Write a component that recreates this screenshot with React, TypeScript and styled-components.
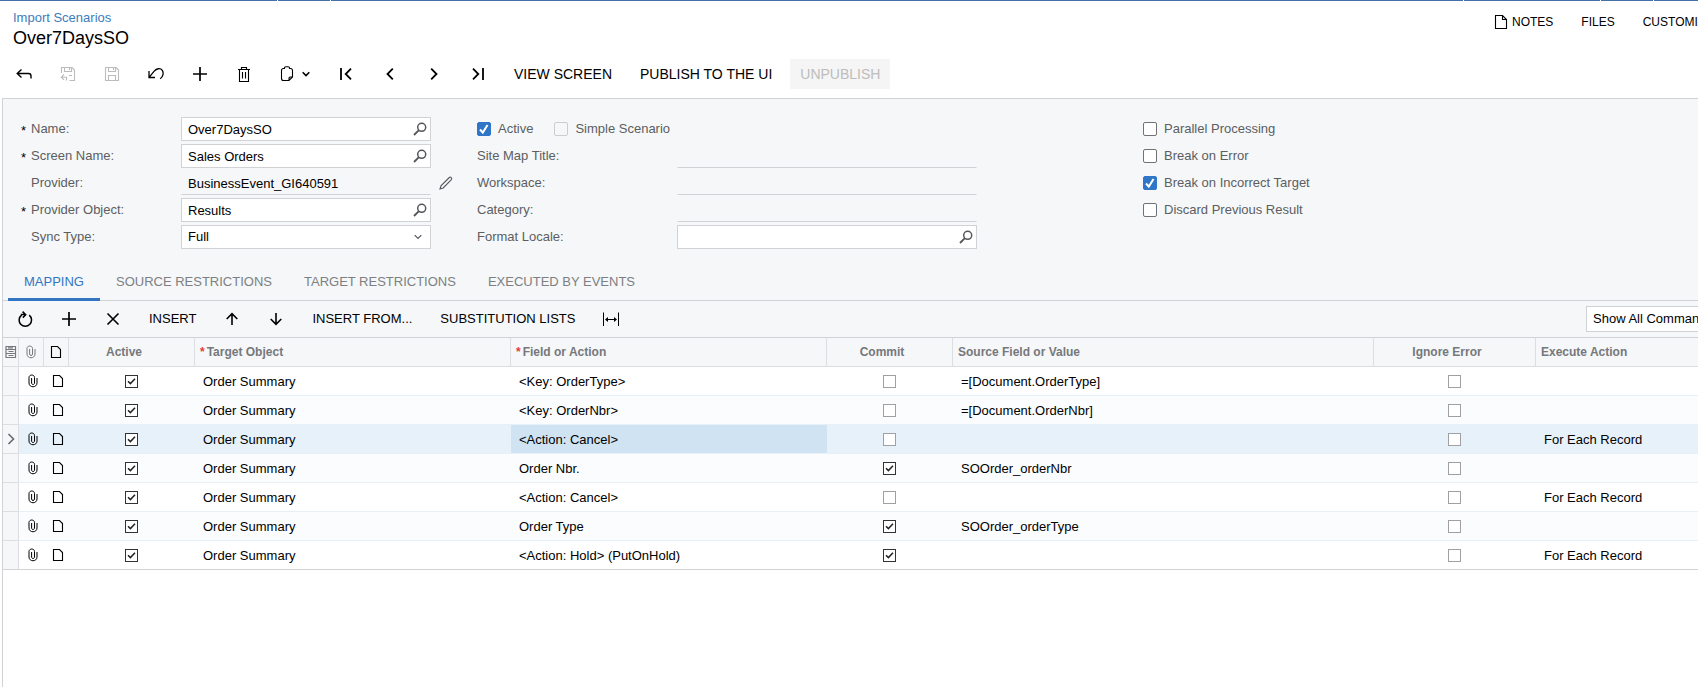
import React from "react";
import styled, { createGlobalStyle, css } from "styled-components";

const GlobalStyle = createGlobalStyle`
  *, *::before, *::after { box-sizing: border-box; }
  html, body { margin: 0; overflow-x: hidden; }
  body {
    background: #fff;
    color: #000;
    font: 13px/16px "Liberation Sans", Arial, sans-serif;
  }
  button, input, select { font: inherit; color: inherit; margin: 0; }
`;

const LINE = "#d0d2d6";
const PANEL = "#f5f7f9";

const Shell = styled.div`
  display: flex;
  flex-direction: column;
  min-height: 100vh;
  overflow: hidden;
`;

const TopStrip = styled.div`
  display: grid;
  grid-template-columns: 277px 52px 1fr 136px 52px 44px;
  gap: 1px;
  height: 1px;
`;

const StripSegment = styled.span`
  background: #4671a6;
`;

const Header = styled.header`
  display: flex;
  justify-content: space-between;
  padding: 9px 0 0 13px;
`;

const Breadcrumb = styled.a`
  display: block;
  color: #3d7cbc;
  text-decoration: none;
`;

const Title = styled.h1`
  margin: 1px 0 0;
  font-size: 18px;
  line-height: 22px;
  font-weight: 400;
`;

const HeaderTools = styled.div`
  display: flex;
  gap: 28px;
  width: 204px;
  flex: none;
  align-items: flex-start;
  padding-top: 4px;
`;

const HeaderButton = styled.button`
  display: flex;
  flex: none;
  align-items: center;
  gap: 4px;
  height: 16px;
  padding: 0;
  border: 0;
  background: none;
  font-size: 12px;
  white-space: nowrap;
`;

const Toolbar = styled.div<{ $grid?: boolean }>`
  display: flex;
  align-items: center;
  gap: 8px;
  ${({ $grid }) =>
    $grid
      ? css`
          height: 37px;
          padding-left: 4px;
          border-bottom: 1px solid ${LINE};
          font-size: 13px;
        `
      : css`
          height: 49px;
          padding-left: 6px;
          font-size: 14px;
        `}
`;

const ToolButton = styled.button<{ $icon?: boolean; $wide?: boolean }>`
  display: flex;
  flex: none;
  align-items: center;
  justify-content: center;
  gap: 6px;
  height: 30px;
  width: ${({ $icon, $wide }) => ($wide ? "50px" : $icon ? "36px" : "auto")};
  padding: ${({ $icon }) => ($icon ? "0" : "0 10px")};
  border: 0;
  background: none;
  white-space: nowrap;
  &:disabled { color: #bcbcbc; }
  &:disabled:not(:has(svg)) { background: #f5f5f5; }
`;

const WorkArea = styled.main`
  flex: 1;
  margin-left: 2px;
  border-top: 1px solid ${LINE};
  border-left: 1px solid ${LINE};
`;

const Panel = styled.section`
  background: ${PANEL};
`;

const Form = styled.form`
  display: grid;
  grid-template-columns: 456px 666px 1fr;
  padding: 18px 0 0 18px;
`;

const FormColumn = styled.div`
  display: flex;
  flex-direction: column;
  gap: 3px;
`;

const FormRow = styled.div<{ $label: number }>`
  display: grid;
  grid-template-columns: ${({ $label }) => $label}px auto 1fr;
  align-items: center;
  height: 24px;
`;

const CheckRow = styled.div`
  display: flex;
  align-items: center;
  gap: 21px;
  height: 24px;
`;

const FieldLabel = styled.label<{ $starred?: boolean }>`
  display: flex;
  color: #5c5e61;
  padding-left: ${({ $starred }) => ($starred ? "0" : "10px")};
`;

const PlainLabel = styled(FieldLabel)`
  padding-left: 0;
`;

const Star = styled.span`
  width: 10px;
  height: 16px;
  padding-top: 2px;
  color: #000;
`;

const Box = styled.div<{ $width: number; $flat?: boolean }>`
  display: flex;
  align-items: center;
  width: ${({ $width }) => $width}px;
  height: 24px;
  border: 1px solid ${LINE};
  background: #fff;
  color: #54565a;
  ${({ $flat }) =>
    $flat &&
    css`
      border-color: transparent transparent ${LINE};
      background: none;
    `}
`;

const TextInput = styled.input`
  flex: 1;
  min-width: 0;
  height: 22px;
  padding: 1px 0 0 6px;
  border: 0;
  outline: 0;
  background: none;
  color: #000;
`;

const Select = styled.select`
  appearance: none;
  flex: 1;
  height: 22px;
  padding: 0 0 0 6px;
  border: 0;
  background: none;
  color: #000;
`;

const IconButton = styled.button`
  display: flex;
  align-items: center;
  justify-content: center;
  width: 20px;
  height: 20px;
  padding: 0;
  border: 0;
  background: none;
  color: #54565a;
`;

const ChevronSlot = styled.span`
  display: flex;
  justify-content: center;
  width: 24px;
  pointer-events: none;
`;

const EditSlot = styled.span`
  padding-left: 5px;
`;

const CheckLabel = styled.label`
  display: flex;
  align-items: center;
  gap: 7px;
  color: #5c5e61;
`;

const CheckStack = styled.span<{ $size: number }>`
  display: inline-grid;
  width: ${({ $size }) => $size}px;
  height: ${({ $size }) => $size}px;
  vertical-align: middle;
  & > * { grid-area: 1 / 1; }
  & > svg { pointer-events: none; }
`;

const FormCheck = styled.input`
  appearance: none;
  width: 14px;
  height: 14px;
  border: 1px solid #707276;
  border-radius: 2px;
  background: #fff;
  &:checked { background: #2f75c8; border-color: #2f75c8; }
  &:disabled { background: ${PANEL}; border-color: #cbcdcf; }
`;

const GridCheck = styled.input`
  appearance: none;
  width: 13px;
  height: 13px;
  border: 1px solid #a0a0a4;
  background: #fff;
  &:checked { border-color: #333; }
`;

const Tabs = styled.div`
  display: flex;
  height: 42px;
  margin-top: 10px;
  padding-left: 5px;
  border-bottom: 1px solid ${LINE};
`;

const Tab = styled.button<{ $active?: boolean }>`
  height: 42px;
  padding: 6px 16px 0;
  border: 0;
  border-bottom: 3px solid ${({ $active }) => ($active ? "#3276c3" : "transparent")};
  background: none;
  color: ${({ $active }) => ($active ? "#3276c3" : "#7d7f82")};
  white-space: nowrap;
`;

const FilterSlot = styled.div`
  flex: none;
  width: 112px;
  margin-left: auto;
`;

const FilterSelect = styled.select`
  appearance: none;
  width: 176px;
  height: 26px;
  padding: 0 24px 0 6px;
  border: 1px solid ${LINE};
  border-radius: 0;
  background: #fff;
`;

const Grid = styled.table`
  width: 100%;
  table-layout: fixed;
  border-collapse: separate;
  border-spacing: 0;
  border-bottom: 1px solid ${LINE};
`;

const HeadCell = styled.th<{ $center?: boolean; $icon?: boolean; $dark?: boolean }>`
  height: 29px;
  padding: ${({ $center, $icon }) => ($icon ? "0" : $center ? "0 15px 0 0" : "0 5px")};
  border-right: 1px solid #dcdee2;
  border-bottom: 1px solid #dcdee2;
  background: ${PANEL};
  color: ${({ $dark }) => ($dark ? "#000" : "#76787c")};
  font-size: 12px;
  text-align: ${({ $center, $icon }) => ($center || $icon ? "center" : "left")};
  white-space: nowrap;
  & svg { display: block; margin: 0 auto; }
  &:last-child { border-right: 0; }
`;

const Required = styled.span`
  margin-right: 2px;
  color: #e2403a;
`;

const Row = styled.tr<{ $selected?: boolean }>`
  background: ${({ $selected }) => ($selected ? "#e7f1fa" : "#fff")};
  ${({ $selected }) => !$selected && css`&:nth-child(even) { background: #fafcfe; }`}
  &:last-child > td { height: 28px; border-bottom: 0; }
`;

const cellPadding = {
  icon: "0 0 0 3px",
  check: "0 2px 0 0",
  gutter: "0",
  text: "1px 8px 0",
};

const Cell = styled.td<{ $kind?: "icon" | "check" | "gutter"; $focused?: boolean }>`
  height: 29px;
  padding: ${({ $kind }) => cellPadding[$kind ?? "text"]};
  border-bottom: 1px solid #e7f0f8;
  text-align: ${({ $kind }) => ($kind ? "center" : "left")};
  white-space: nowrap;
  color: #000;
  & > svg { display: block; margin: 0 auto; }
  ${({ $kind }) =>
    $kind === "gutter" &&
    css`
      border-right: 1px solid #dcdee2;
      border-bottom-color: #dcdee2;
      background: ${PANEL};
      color: #66686c;
    `}
  ${({ $focused }) => $focused && css`background: #cfe3f3;`}
`;

type IconProps = { w?: number; h?: number; sw?: number; children: React.ReactNode };

const Icon = ({ w = 16, h = 16, sw = 1.5, children }: IconProps) => (
  <svg width={w} height={h} viewBox={`0 0 ${w} ${h}`} fill="none" stroke="currentColor" strokeWidth={sw} aria-hidden="true">
    {children}
  </svg>
);

const BackIcon = () => (
  <Icon sw={1.4}><path d="M5.5 3.5 1.2 7.5 5.5 11.5M1.5 7.5H12.5Q15 7.5 15 10V12.5" /></Icon>
);
const SaveCloseIcon = () => (
  <Icon sw={1.1}>
    <path d="M1.5 7V1.5H12L14.5 4V14.5H9.5M4.5 1.5V5.5H11.5V1.5M9.5 2V4M4 8.5 1.3 11.2 4 13.9M1.5 11.2H6.5V14.5M9 9.5H12" />
  </Icon>
);
const SaveIcon = () => (
  <Icon sw={1.1}>
    <path d="M1.5 1.5H12L14.5 4V14.5H1.5ZM4.5 1.5V5.5H11.5V1.5M9.5 2V4M4.5 14.5V9.5H11.5V14.5" />
  </Icon>
);
const UndoIcon = () => (
  <Icon sw={1.3}><path d="M1 5V11.5H7M1.3 11.2 6.2 5.2C8.5 2.3 12.5 1.8 14.3 4.4 15.8 6.8 15.3 10.5 12.2 12.8" /></Icon>
);
const PlusIcon = () => (
  <Icon sw={1.7}><path d="M8 1V15M1 8H15" /></Icon>
);
const TrashIcon = () => (
  <Icon sw={1.1}>
    <path d="M5.5 3.5V1.5H10.5V3.5M3.5 4V15.5H12.5V4M2 3.5H14M6.5 6V12.5M9.5 6V12.5" />
  </Icon>
);
const ClipboardIcon = () => (
  <Icon sw={1.1}>
    <path d="M4.5 2.5H3.5Q1.5 2.5 1.5 4.5V12.5Q1.5 14.5 3.5 14.5H9L12.5 11V4.5Q12.5 2.5 10.5 2.5H9.5M4.5 3V2Q4.5 .8 5.8 .8H8.2Q9.5 .8 9.5 2V3M9 14.5V12Q9 11 10.2 11H12.5" />
  </Icon>
);
const SmallChevron = ({ sw = 1.6 }: { sw?: number }) => (
  <Icon w={8} h={8} sw={sw}><path d="M.7 2.2 4 5.5 7.3 2.2" /></Icon>
);
const FirstIcon = () => (
  <Icon sw={1.8}><path d="M3 2V14M13 2.7 7.7 8 13 13.3" /></Icon>
);
const PrevIcon = () => (
  <Icon sw={1.8}><path d="M10.8 2.7 5.5 8 10.8 13.3" /></Icon>
);
const NextIcon = () => (
  <Icon sw={1.8}><path d="M5.2 2.7 10.5 8 5.2 13.3" /></Icon>
);
const LastIcon = () => (
  <Icon sw={1.8}><path d="M3 2.7 8.3 8 3 13.3M13 2V14" /></Icon>
);
const NoteIcon = () => (
  <Icon w={14} sw={1.1}><path d="M1.5 1.5H8.5L12.5 5.5V14.5H1.5ZM8.5 1.5V5.5H12.5" /></Icon>
);
const SearchIcon = () => (
  <Icon sw={1.5}><circle cx="9.7" cy="6.3" r="4" /><path d="M6.9 9.1 2 14" strokeWidth={1.8} /></Icon>
);
const PencilIcon = () => (
  <Icon sw={1.1}><path d="M2 14 3 10.8 11.3 2.5Q12.2 1.6 13.2 2.6 14.2 3.6 13.4 4.6L5.2 12.9Z" /></Icon>
);
const RefreshIcon = () => (
  <Icon sw={1.5}><path d="M4.6 4.1A6.2 6.2 0 1 0 12.2 4.2M3.8 3.6H8.6M5.6 .6 8.7 3.7 5.8 6.6" /></Icon>
);
const CloseIcon = () => (
  <Icon sw={1.6}><path d="M2.5 2.5 13.5 13.5M13.5 2.5 2.5 13.5" /></Icon>
);
const UpIcon = () => (
  <Icon sw={1.6}><path d="M8 14V2.5M2.7 8 8 2.7 13.3 8" /></Icon>
);
const DownIcon = () => (
  <Icon sw={1.6}><path d="M8 2V13.5M2.7 8 8 13.3 13.3 8" /></Icon>
);
const FitIcon = () => (
  <Icon sw={1}><path d="M.5 1.5V15M15.5 1.5V15M3 8.5H13" /><path d="M2 8.5 5 6V11ZM14 8.5 11 6V11Z" fill="currentColor" stroke="none" /></Icon>
);
const ClipIcon = () => (
  <Icon w={10} h={14} sw={1}>
    <path d="M1 3.5V9C1 14 9 14 9 9V4M1 3.5C1 .2 6.5 .2 6.5 3.5V9C6.5 11 3.6 11 3.6 9V4" />
  </Icon>
);
const PageIcon = () => (
  <Icon w={12} h={14} sw={1.1}><path d="M1.5 1.5H7.5L10.5 4.5V12.5H1.5Z" /></Icon>
);
const GridMenuIcon = () => (
  <Icon w={12} h={14} sw={1.2}><path d="M1 1.5H10.5V12.5H1ZM1 4.5H10.5M1 8.5H10.5M3 2.8H8M3.5 6.5H8.5M3.5 10.5H8.5" /></Icon>
);
const RowArrowIcon = () => (
  <Icon w={10} h={12} sw={1.6}><path d="M2.5 1 7.5 6 2.5 11" /></Icon>
);

const FormCheckbox = ({ label, checked, disabled }: { label: string; checked?: boolean; disabled?: boolean }) => (
  <CheckLabel>
    <CheckStack $size={14}>
      <FormCheck type="checkbox" defaultChecked={checked} disabled={disabled} />
      {checked && (
        <svg width="14" height="14" viewBox="0 0 14 14" fill="none" stroke="#fff" strokeWidth="2">
          <path d="M3 7.5 5.8 10.5 10.5 3" />
        </svg>
      )}
    </CheckStack>
    {label}
  </CheckLabel>
);

const GridCheckbox = ({ label, checked }: { label: string; checked?: boolean }) => (
  <CheckStack $size={13}>
    <GridCheck type="checkbox" aria-label={label} defaultChecked={checked} />
    {checked && (
      <svg width="13" height="13" viewBox="0 0 13 13" fill="none" stroke="#222" strokeWidth="1.5">
        <path d="M3 6.2 5.4 8.6 10 3.8" />
      </svg>
    )}
  </CheckStack>
);

type FieldProps = {
  id: string;
  label: string;
  value?: string;
  required?: boolean;
  flat?: boolean;
  edit?: boolean;
};

const LookupField = ({ id, label, value = "", required, flat, edit }: FieldProps) => (
  <FormRow $label={160}>
    <FieldLabel htmlFor={id} $starred={required}>
      {required && <Star>*</Star>}
      {label}
    </FieldLabel>
    <Box $width={250} $flat={flat}>
      <TextInput id={id} defaultValue={value} readOnly={flat} />
      {!flat && <IconButton type="button" aria-label={`Look up ${label}`}><SearchIcon /></IconButton>}
    </Box>
    {edit && <EditSlot><IconButton type="button" aria-label="Edit"><PencilIcon /></IconButton></EditSlot>}
  </FormRow>
);

const SiteField = ({ id, label, flat }: FieldProps) => (
  <FormRow $label={200}>
    <PlainLabel htmlFor={id}>{label}</PlainLabel>
    <Box $width={300} $flat={flat}>
      <TextInput id={id} readOnly={flat} />
      {!flat && <IconButton type="button" aria-label={`Look up ${label}`}><SearchIcon /></IconButton>}
    </Box>
  </FormRow>
);

type Mapping = { field: string; commit?: boolean; source?: string; execute?: string; selected?: boolean };

const mappings: Mapping[] = [
  { field: "<Key: OrderType>", source: "=[Document.OrderType]" },
  { field: "<Key: OrderNbr>", source: "=[Document.OrderNbr]" },
  { field: "<Action: Cancel>", execute: "For Each Record", selected: true },
  { field: "Order Nbr.", commit: true, source: "SOOrder_orderNbr" },
  { field: "<Action: Cancel>", execute: "For Each Record" },
  { field: "Order Type", commit: true, source: "SOOrder_orderType" },
  { field: "<Action: Hold> (PutOnHold)", commit: true, execute: "For Each Record" },
];

const columnWidths = [16, 25, 25, 126, 316, 316, 126, 421, 162];

export default function App() {
  return (
    <Shell>
      <GlobalStyle />
      <TopStrip>
        {[0, 1, 2, 3, 4, 5].map((n) => <StripSegment key={n} />)}
      </TopStrip>

      <Header>
        <div>
          <Breadcrumb href="#">Import Scenarios</Breadcrumb>
          <Title>Over7DaysSO</Title>
        </div>
        <HeaderTools>
          <HeaderButton><NoteIcon />NOTES</HeaderButton>
          <HeaderButton>FILES</HeaderButton>
          <HeaderButton>CUSTOMIZATION</HeaderButton>
        </HeaderTools>
      </Header>

      <Toolbar>
        <ToolButton $icon aria-label="Back"><BackIcon /></ToolButton>
        <ToolButton $icon disabled aria-label="Save and close"><SaveCloseIcon /></ToolButton>
        <ToolButton $icon disabled aria-label="Save"><SaveIcon /></ToolButton>
        <ToolButton $icon aria-label="Undo"><UndoIcon /></ToolButton>
        <ToolButton $icon aria-label="Add"><PlusIcon /></ToolButton>
        <ToolButton $icon aria-label="Delete"><TrashIcon /></ToolButton>
        <ToolButton $icon $wide aria-label="Clipboard"><ClipboardIcon /><SmallChevron /></ToolButton>
        <ToolButton $icon aria-label="First"><FirstIcon /></ToolButton>
        <ToolButton $icon aria-label="Previous"><PrevIcon /></ToolButton>
        <ToolButton $icon aria-label="Next"><NextIcon /></ToolButton>
        <ToolButton $icon aria-label="Last"><LastIcon /></ToolButton>
        <ToolButton>VIEW SCREEN</ToolButton>
        <ToolButton>PUBLISH TO THE UI</ToolButton>
        <ToolButton disabled>UNPUBLISH</ToolButton>
      </Toolbar>

      <WorkArea>
        <Panel>
          <Form>
            <FormColumn>
              <LookupField id="name" label="Name:" value="Over7DaysSO" required />
              <LookupField id="screen" label="Screen Name:" value="Sales Orders" required />
              <LookupField id="provider" label="Provider:" value="BusinessEvent_GI640591" flat edit />
              <LookupField id="object" label="Provider Object:" value="Results" required />
              <FormRow $label={160}>
                <FieldLabel htmlFor="sync">Sync Type:</FieldLabel>
                <Box $width={250}>
                  <Select id="sync" defaultValue="Full"><option>Full</option></Select>
                  <ChevronSlot><SmallChevron sw={1.2} /></ChevronSlot>
                </Box>
              </FormRow>
            </FormColumn>
            <FormColumn>
              <CheckRow>
                <FormCheckbox label="Active" checked />
                <FormCheckbox label="Simple Scenario" disabled />
              </CheckRow>
              <SiteField id="title" label="Site Map Title:" flat />
              <SiteField id="workspace" label="Workspace:" flat />
              <SiteField id="category" label="Category:" flat />
              <SiteField id="locale" label="Format Locale:" />
            </FormColumn>
            <FormColumn>
              <CheckRow><FormCheckbox label="Parallel Processing" /></CheckRow>
              <CheckRow><FormCheckbox label="Break on Error" /></CheckRow>
              <CheckRow><FormCheckbox label="Break on Incorrect Target" checked /></CheckRow>
              <CheckRow><FormCheckbox label="Discard Previous Result" /></CheckRow>
            </FormColumn>
          </Form>

          <Tabs role="tablist">
            <Tab role="tab" aria-selected $active>MAPPING</Tab>
            <Tab role="tab">SOURCE RESTRICTIONS</Tab>
            <Tab role="tab">TARGET RESTRICTIONS</Tab>
            <Tab role="tab">EXECUTED BY EVENTS</Tab>
          </Tabs>

          <Toolbar $grid>
            <ToolButton $icon aria-label="Refresh"><RefreshIcon /></ToolButton>
            <ToolButton $icon aria-label="Add row"><PlusIcon /></ToolButton>
            <ToolButton $icon aria-label="Delete row"><CloseIcon /></ToolButton>
            <ToolButton>INSERT</ToolButton>
            <ToolButton $icon aria-label="Move up"><UpIcon /></ToolButton>
            <ToolButton $icon aria-label="Move down"><DownIcon /></ToolButton>
            <ToolButton>INSERT FROM...</ToolButton>
            <ToolButton>SUBSTITUTION LISTS</ToolButton>
            <ToolButton $icon aria-label="Fit columns"><FitIcon /></ToolButton>
            <FilterSlot>
              <FilterSelect aria-label="Command filter"><option>Show All Commands</option></FilterSelect>
            </FilterSlot>
          </Toolbar>
        </Panel>

        <Grid>
          <colgroup>
            {columnWidths.map((width, i) => <col key={i} width={width} />)}
            <col />
          </colgroup>
          <thead>
            <tr>
              <HeadCell $icon><GridMenuIcon /></HeadCell>
              <HeadCell $icon><ClipIcon /></HeadCell>
              <HeadCell $icon $dark><PageIcon /></HeadCell>
              <HeadCell $center>Active</HeadCell>
              <HeadCell><Required>*</Required>Target Object</HeadCell>
              <HeadCell><Required>*</Required>Field or Action</HeadCell>
              <HeadCell $center>Commit</HeadCell>
              <HeadCell>Source Field or Value</HeadCell>
              <HeadCell $center>Ignore Error</HeadCell>
              <HeadCell>Execute Action</HeadCell>
            </tr>
          </thead>
          <tbody>
            {mappings.map((m, i) => (
              <Row key={i} $selected={m.selected}>
                <Cell $kind="gutter">{m.selected && <RowArrowIcon />}</Cell>
                <Cell $kind="icon"><ClipIcon /></Cell>
                <Cell $kind="icon"><PageIcon /></Cell>
                <Cell $kind="check"><GridCheckbox label="Active" checked /></Cell>
                <Cell>Order Summary</Cell>
                <Cell $focused={m.selected}>{m.field}</Cell>
                <Cell $kind="check"><GridCheckbox label="Commit" checked={m.commit} /></Cell>
                <Cell>{m.source}</Cell>
                <Cell $kind="check"><GridCheckbox label="Ignore error" /></Cell>
                <Cell>{m.execute}</Cell>
              </Row>
            ))}
          </tbody>
        </Grid>
      </WorkArea>
    </Shell>
  );
}
